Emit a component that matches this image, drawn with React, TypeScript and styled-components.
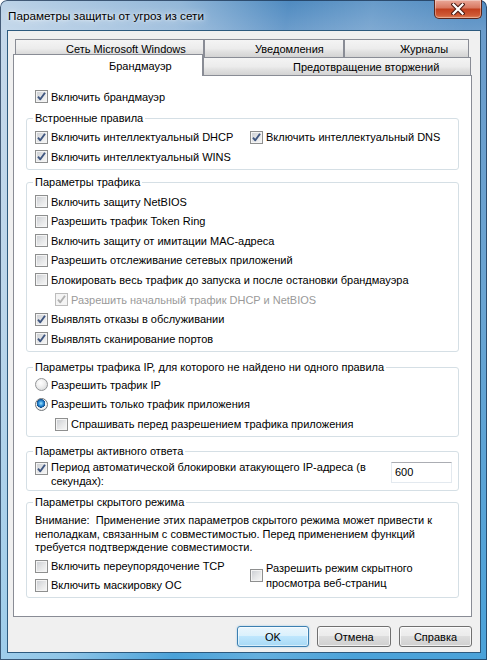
import React from "react";
import styled, { createGlobalStyle, css } from "styled-components";

const GlobalStyle = createGlobalStyle`
  html, body { margin: 0; padding: 0; }
  body {
    width: 487px;
    height: 660px;
    overflow: hidden;
    font-family: "Liberation Sans", Arial, sans-serif;
    font-size: 11px;
    color: #000;
  }
  * { box-sizing: border-box; }
`;

const Window = styled.div`
  width: 487px;
  height: 660px;
  display: flex;
  flex-direction: column;
  padding: 0 6px 7px 7px;
  border-radius: 7px 7px 0 0;
  box-shadow: inset 0 0 0 1px rgba(25, 50, 80, 0.75);
  background:
    linear-gradient(100deg, rgba(255,255,255,0.62) 0%, rgba(255,255,255,0.38) 30%, rgba(255,255,255,0) 48%, rgba(255,255,255,0.14) 62%, rgba(255,255,255,0) 78%),
    linear-gradient(to bottom, #4e8ac0 0px, #6b9ccb 30px, #6aa4d2 45%, #4aa2d9 100%);
`;

const TitleBar = styled.div`
  height: 30px;
  display: flex;
  align-items: flex-start;
  justify-content: space-between;
`;

const TitleText = styled.div`
  margin-top: 8px;
  padding-left: 1px;
  font-size: 11.7px;
  line-height: 15px;
  text-shadow: 0 0 8px rgba(255,255,255,0.95), 0 0 3px rgba(255,255,255,0.9);
`;

const CloseButton = styled.div`
  width: 48px;
  height: 19px;
  margin-right: -1px;
  display: flex;
  align-items: center;
  justify-content: center;
  border: 1px solid #5a261d;
  border-top: none;
  border-radius: 0 0 5px 5px;
  background: linear-gradient(to bottom, #eaa99a 0%, #d97a63 42%, #c2401f 52%, #cf5a36 85%, #e0855c 100%);
  box-shadow: inset 0 0 0 1px rgba(255,255,255,0.35);
`;

const Client = styled.div`
  flex: 1;
  display: flex;
  flex-direction: column;
  background: #f0f0f0;
  border: 1px solid #2d5a7e;
  padding: 8px 8px 5px 5px;
`;

const TabRow = styled.div<{ $indent: number }>`
  display: flex;
  height: 18px;
  padding-left: ${p => p.$indent}px;
`;

const Tab = styled.div<{ $width: number; $textLeft: number; $selected?: boolean }>`
  width: ${p => p.$width}px;
  height: 18px;
  flex-shrink: 0;
  display: flex;
  align-items: center;
  padding-left: ${p => p.$textLeft}px;
  border: 1px solid #898c95;
  border-bottom: none;
  white-space: nowrap;
  background: linear-gradient(to bottom, #f4f4f4 0%, #ececec 50%, #e0e0e0 70%, #d3d3d3 100%);
  ${p => p.$selected && css`
    position: relative;
    z-index: 1;
    height: 22px;
    margin-top: -3px;
    background: #fff;
  `}
`;

const Panel = styled.div`
  height: 542px;
  background: #fff;
  border: 1px solid #898c95;
  padding: 11px 6px 0 12px;
  display: flex;
  flex-direction: column;
`;

const Row = styled.div<{ $indent?: number; $disabled?: boolean; $h?: number }>`
  height: ${p => p.$h ?? 19.6}px;
  display: flex;
  align-items: center;
  gap: 3px;
  padding-left: ${p => p.$indent ?? 0}px;
  white-space: nowrap;
  color: ${p => (p.$disabled ? "#9a9a9a" : "#000")};
`;

const Group = styled.fieldset<{ $top: number }>`
  margin: ${p => p.$top}px 0 0 0;
  width: 433px;
  min-width: 0;
  border: 1px solid #d5dfe5;
  border-radius: 3px;
  padding: 0 6px 2px 8px;
`;

const Legend = styled.legend`
  padding: 0 2px;
  margin-left: -2px;
  line-height: 15px;
`;

const GroupBody = styled.div<{ $top: number }>`
  padding-top: ${p => p.$top}px;
`;

const TwoCols = styled.div`
  display: grid;
  grid-template-columns: 215px 1fr;
  align-items: center;
`;

const Column = styled.div`
  display: flex;
  flex-direction: column;
`;

const WrapLabel = styled.div<{ $lh: number }>`
  line-height: ${p => p.$lh}px;
  white-space: nowrap;
`;

const WrapRow = styled.div<{ $boxTop?: number }>`
  display: flex;
  align-items: ${p => (p.$boxTop === undefined ? "center" : "flex-start")};
  gap: 3px;
  & > span:first-child {
    margin-top: ${p => p.$boxTop ?? 0}px;
  }
`;

const Note = styled.div`
  line-height: 13.5px;
  padding-top: 4.5px;
  margin-bottom: 2px;
  white-space: nowrap;
`;

const NumberBox = styled.div`
  width: 61px;
  height: 21px;
  margin: 2px 0 0 auto;
  border: 1px solid #e3e9ef;
  border-top-color: #abadb3;
  background: #fff;
  padding-left: 3px;
  display: flex;
  align-items: center;
`;

const ButtonRow = styled.div`
  display: flex;
  justify-content: flex-end;
  gap: 8px;
  margin-top: 9px;
`;

const Button = styled.div<{ $width: number; $default?: boolean }>`
  width: ${p => p.$width}px;
  height: 21px;
  display: flex;
  align-items: center;
  justify-content: center;
  border: 1px solid #707070;
  border-radius: 3px;
  background: linear-gradient(to bottom, #f2f2f2 0%, #ebebeb 50%, #dddddd 50%, #cfcfcf 100%);
  box-shadow: inset 0 0 0 1px rgba(255,255,255,0.7);
  ${p => p.$default && css`
    border-color: #3c7fb1;
    background: linear-gradient(to bottom, #eaf6fd 0%, #d9f0fc 50%, #bee6fd 50%, #a7d9f5 100%);
    box-shadow: inset 0 0 0 1px rgba(255,255,255,0.55), 0 0 2px rgba(90,170,220,0.6);
  `}
`;

const Box = styled.span<{ $disabled?: boolean }>`
  width: 13px;
  height: 13px;
  flex-shrink: 0;
  display: inline-flex;
  align-items: center;
  justify-content: center;
  border: 1px solid ${p => (p.$disabled ? "#bcbcbc" : "#8e8f8f")};
  background: ${p =>
    p.$disabled
      ? "#f4f4f4"
      : "linear-gradient(135deg, #c9ccd1 0%, #e6e7e8 55%, #f8f8f8 100%)"};
  box-shadow: inset 0 0 0 1px #f4f4f4;
`;

const RadioDot = styled.span<{ $on?: boolean }>`
  width: 13px;
  height: 13px;
  flex-shrink: 0;
  border-radius: 50%;
  border: 1px solid ${p => (p.$on ? "#6e7377" : "#929496")};
  background: ${p =>
    p.$on
      ? "radial-gradient(circle at 45% 40%, #9ee3ff 0, #2a8ad4 28%, #0f4f8f 46%, #f4f4f4 50%, #dcdcdc 100%)"
      : "radial-gradient(circle at 40% 35%, #ffffff 0, #eeeeee 45%, #cfd1d3 100%)"};
`;

const Check = ({ on, disabled }: { on?: boolean; disabled?: boolean }) => (
  <Box $disabled={disabled}>
    {on && (
      <svg width="11" height="11" viewBox="0 0 11 11">
        <path
          d="M2 5.6 L4.3 8.3 L9 1.8"
          fill="none"
          stroke={disabled ? "#b0b0b0" : "#3f5680"}
          strokeWidth="1.9"
          strokeLinejoin="round"
        />
      </svg>
    )}
  </Box>
);

const CloseX = () => (
  <svg width="14" height="12" viewBox="0 0 14 12">
    <path d="M2.5 1.5 L11.5 10.5 M11.5 1.5 L2.5 10.5" stroke="#4a1a12" strokeWidth="4.2" strokeLinecap="square" />
    <path d="M2.5 1.5 L11.5 10.5 M11.5 1.5 L2.5 10.5" stroke="#fff" strokeWidth="2.2" strokeLinecap="square" />
  </svg>
);

const trafficRows: { text: string; on?: boolean; disabled?: boolean; indent?: number }[] = [
  { text: "Включить защиту NetBIOS" },
  { text: "Разрешить трафик Token Ring" },
  { text: "Включить защиту от имитации MAC-адреса" },
  { text: "Разрешить отслеживание сетевых приложений" },
  { text: "Блокировать весь трафик до запуска и после остановки брандмауэра" },
  { text: "Разрешить начальный трафик DHCP и NetBIOS", on: true, disabled: true, indent: 20 },
  { text: "Выявлять отказы в обслуживании", on: true },
  { text: "Выявлять сканирование портов", on: true },
];

export default function App() {
  return (
    <>
      <GlobalStyle />
      <Window>
        <TitleBar>
          <TitleText>Параметры защиты от угроз из сети</TitleText>
          <CloseButton>
            <CloseX />
          </CloseButton>
        </TitleBar>
        <Client>
          <TabRow $indent={2}>
            <Tab $width={189} $textLeft={50}>Сеть Microsoft Windows</Tab>
            <Tab $width={140} $textLeft={50}>Уведомления</Tab>
            <Tab $width={125} $textLeft={55}>Журналы</Tab>
          </TabRow>
          <TabRow $indent={0}>
            <Tab $width={190} $textLeft={95} $selected>Брандмауэр</Tab>
            <Tab $width={268} $textLeft={89}>Предотвращение вторжений</Tab>
          </TabRow>
          <Panel>
            <Row $indent={9}>
              <Check on />
              Включить брандмауэр
            </Row>

            <Group $top={4}>
              <Legend>Встроенные правила</Legend>
              <GroupBody $top={2}>
                <TwoCols>
                  <Row>
                    <Check on />
                    Включить интеллектуальный DHCP
                  </Row>
                  <Row>
                    <Check on />
                    Включить интеллектуальный DNS
                  </Row>
                  <Row>
                    <Check on />
                    Включить интеллектуальный WINS
                  </Row>
                </TwoCols>
              </GroupBody>
            </Group>

            <Group $top={5}>
              <Legend>Параметры трафика</Legend>
              <GroupBody $top={2}>
                {trafficRows.map(r => (
                  <Row key={r.text} $indent={r.indent} $disabled={r.disabled}>
                    <Check on={r.on} disabled={r.disabled} />
                    {r.text}
                  </Row>
                ))}
              </GroupBody>
            </Group>

            <Group $top={8}>
              <Legend>Параметры трафика IP, для которого не найдено ни одного правила</Legend>
              <GroupBody $top={0.5}>
                <Row>
                  <RadioDot />
                  Разрешить трафик IP
                </Row>
                <Row>
                  <RadioDot $on />
                  Разрешить только трафик приложения
                </Row>
                <Row $indent={20}>
                  <Check />
                  Спрашивать перед разрешением трафика приложения
                </Row>
              </GroupBody>
            </Group>

            <Group $top={7}>
              <Legend>Параметры активного ответа</Legend>
              <GroupBody $top={1}>
                <WrapRow $boxTop={2}>
                  <Check on />
                  <WrapLabel $lh={14}>
                    Период автоматической блокировки атакующего IP-адреса (в
                    <br />
                    секундах):
                  </WrapLabel>
                  <NumberBox>600</NumberBox>
                </WrapRow>
              </GroupBody>
            </Group>

            <Group $top={4}>
              <Legend>Параметры скрытого режима</Legend>
              <Note>
                Внимание:&nbsp; Применение этих параметров скрытого режима может привести к
                <br />
                неполадкам, связанным с совместимостью. Перед применением функций
                <br />
                требуется подтверждение совместимости.
              </Note>
              <TwoCols>
                <Column>
                  <Row $h={19}>
                    <Check />
                    Включить переупорядочение TCP
                  </Row>
                  <Row $h={19}>
                    <Check />
                    Включить маскировку ОС
                  </Row>
                </Column>
                <WrapRow>
                  <Check />
                  <WrapLabel $lh={14.5}>
                    Разрешить режим скрытного
                    <br />
                    просмотра веб-страниц
                  </WrapLabel>
                </WrapRow>
              </TwoCols>
            </Group>
          </Panel>
          <ButtonRow>
            <Button $width={72} $default>OK</Button>
            <Button $width={74}>Отмена</Button>
            <Button $width={73}>Справка</Button>
          </ButtonRow>
        </Client>
      </Window>
    </>
  );
}
